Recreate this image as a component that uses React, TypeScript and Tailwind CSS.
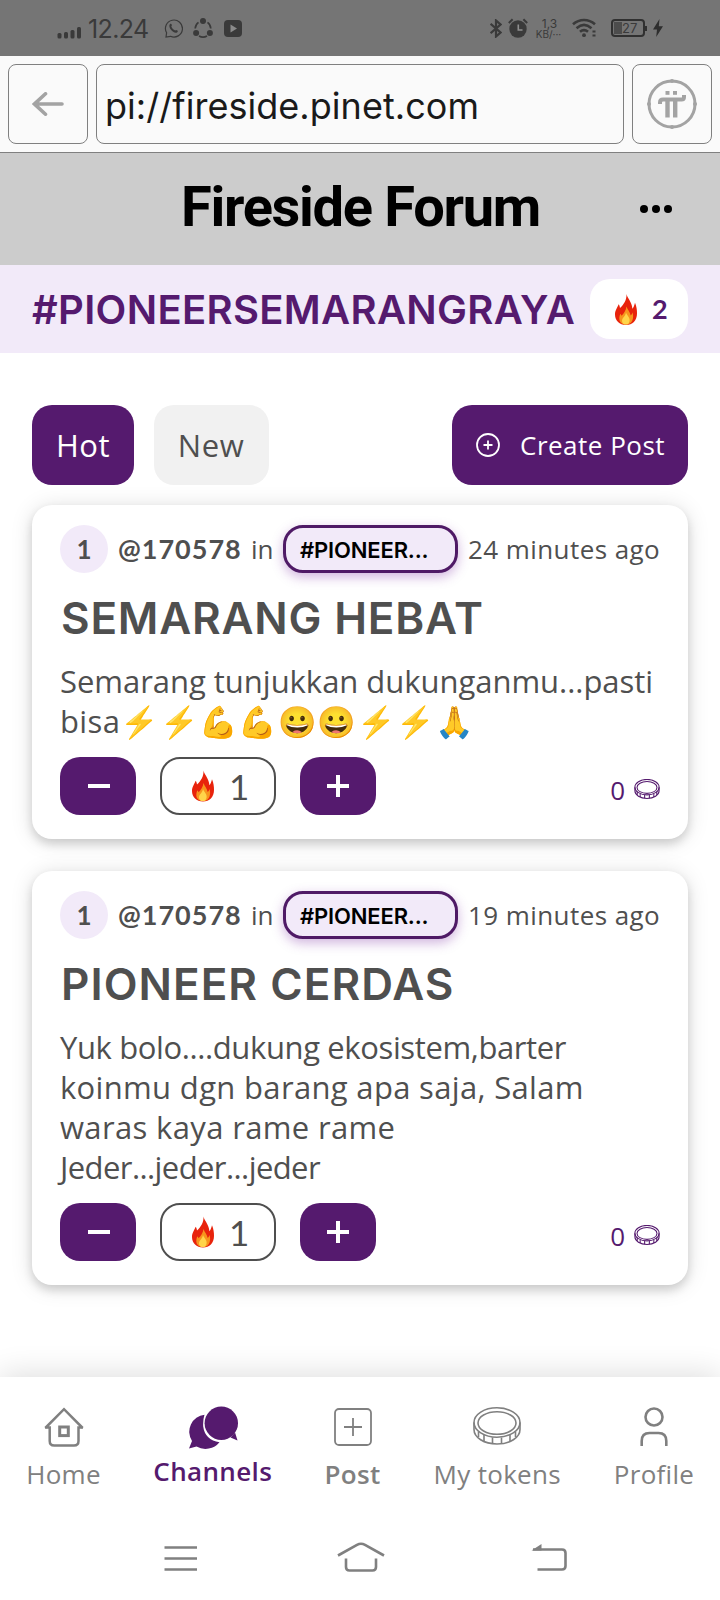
import React from 'react'
import clsx from 'clsx'

type BodyLine = { text: string; className: string }

type Post = {
  id: number
  level: number
  user: string
  channel: string
  time: string
  title: string
  titleClass: string
  body: BodyLine[]
  votes: number
  coins: number
}

const posts: Post[] = [
  {
    id: 1,
    level: 1,
    user: '@170578',
    channel: '#PIONEER...',
    time: '24 minutes ago',
    title: 'SEMARANG HEBAT',
    titleClass: 'tracking-[0.8px]',
    body: [
      { text: 'Semarang tunjukkan dukunganmu...pasti', className: 'tracking-[-0.03px]' },
      { text: 'bisa⚡⚡💪💪😀😀⚡⚡🙏', className: 'tracking-[0.38px]' },
    ],
    votes: 1,
    coins: 0,
  },
  {
    id: 2,
    level: 1,
    user: '@170578',
    channel: '#PIONEER...',
    time: '19 minutes ago',
    title: 'PIONEER CERDAS',
    titleClass: 'tracking-[1.05px]',
    body: [
      { text: 'Yuk bolo....dukung ekosistem,barter', className: 'tracking-[-0.38px]' },
      { text: 'koinmu dgn barang apa saja, Salam', className: 'tracking-[0.33px]' },
      { text: 'waras kaya rame rame', className: 'tracking-[0.35px]' },
      { text: 'Jeder...jeder...jeder', className: 'tracking-[-0.58px]' },
    ],
    votes: 1,
    coins: 0,
  },
]

const FireIcon = ({ className }: { className?: string }) => (
  <svg viewBox="0 0 22 31" className={className} fill="none">
    <path
      d="M11.500 0C12.300 3.800 15.600 6.600 16.800 11.500C17.300 13.200 17.300 14.200 17.300 14.800C18.600 13.600 19.400 11.200 20 8.800C21.600 12.500 22 16 22 19.500C22 26.500 17.500 31 11 31C4.500 31 0 26.500 0 20.500C0 16 2.600 13.500 3.600 10.200C4.500 11.300 4.800 12.600 5 14C8.800 10.500 11.800 6 11.500 0Z"
      fill="#e8230c"
    />
    <path
      d="M11.500 12.500C12.500 16 15 17.500 15.700 21.500C16.800 20.600 17.300 19.400 17.500 18.200C18.900 22.500 18.400 30.600 11 30.600C4 30.600 3.200 24.500 5.400 19.800C6 20.400 6.200 21 6.500 21.800C8.800 19.500 11 16.500 11.500 12.500Z"
      fill="#f7941d"
    />
    <path
      d="M11 18.500C12.200 21.800 15.300 23.500 14.600 27C14 30 12.500 30.600 11 30.600C9 30.600 6.900 29.500 7 26.700C7.100 24 10.500 22 11 18.500Z"
      fill="#ffd54a"
    />
  </svg>
)

const CoinIcon = ({ className, strokeWidth }: { className?: string; strokeWidth: number }) => (
  <svg viewBox="0 0 48 38" className={className} fill="none" stroke="currentColor" strokeWidth={strokeWidth}>
    <ellipse cx="24" cy="15.500" rx="23" ry="14.700" />
    <ellipse cx="24" cy="16" rx="19" ry="11.300" />
    <path d="M1 15.500V22.500C1 30.500 11 37 24 37S47 30.500 47 22.500V15.500" />
    <path d="M5.500 24.500V30M11 28V34M19.500 30.500V36.700M28.500 30.500V36.700M37 28V34M42.500 24.500V30" />
  </svg>
)

const StatusBar = () => (
  <div className="flex h-14 items-center bg-[#757575] pl-[57px] text-[#3a3a3a]">
    <svg viewBox="0 0 24 12" className="mt-[9px] h-3 w-6" fill="currentColor">
      <rect x="0.500" y="6" width="4" height="5.500" rx="1.500" />
      <rect x="7" y="5" width="4" height="6.500" rx="1.500" />
      <rect x="13.500" y="3" width="4" height="8.500" rx="1.500" />
      <rect x="20" y="0" width="4" height="11.500" rx="1.500" />
    </svg>
    <span className="mt-[2px] ml-[7px] w-[62px] text-[25px] leading-[38px] tracking-[-0.6px] whitespace-nowrap font-['Inter',sans-serif]">
      12.24
    </span>
    <svg viewBox="0 0 19 19" className="ml-[14px] size-[19px]" fill="none" stroke="currentColor">
      <path d="M2 18L2.600 13.800A8.500 8.500 0 1 1 6.500 17.300Z" strokeWidth="1.200" />
      <path
        d="M5.800 5.200C6.500 4.400 7.300 4.600 7.700 5.600C8.100 6.700 7.700 6.900 7.300 7.500C8 9.300 9.500 10.800 11.200 11.500C12 10.700 12.300 10.700 13.400 11.500C14.200 12.100 13.800 13 13 13.500C9.500 15 3.700 8.500 5.800 5.200Z"
        fill="currentColor"
        stroke="none"
      />
    </svg>
    <svg viewBox="0 0 20 20" className="ml-[10px] size-5" fill="none" stroke="currentColor" strokeWidth="1.600">
      <path d="M2.200 10.500A8 8 0 0 1 5.500 4.300M14.500 4.300A8 8 0 0 1 17.800 10.500M14 18A8 8 0 0 1 6 18" />
      <g fill="currentColor" stroke="none">
        <circle cx="10" cy="3" r="3" />
        <circle cx="3.100" cy="15" r="3" />
        <circle cx="16.900" cy="15" r="3" />
      </g>
    </svg>
    <svg viewBox="0 0 18 17" className="ml-[11px] h-[17px] w-[18px]">
      <rect width="18" height="17" rx="4" fill="currentColor" />
      <path d="M6.500 4.500V12.500L13 8.500Z" fill="#8a8a8a" />
    </svg>
    <svg viewBox="0 0 12 19" className="ml-[248px] h-[19px] w-3" fill="none" stroke="currentColor" strokeWidth="2.200">
      <path d="M0.600 4.800L10.500 13.500L6 17.500V1.500L10.500 5.500L0.600 14.200" />
    </svg>
    <svg viewBox="0 0 20 20" className="ml-[6px] size-5" fill="none">
      <circle cx="10" cy="11" r="8.700" fill="currentColor" />
      <path d="M0.800 5L4.600 1.200M19.200 5L15.400 1.200" stroke="currentColor" strokeWidth="2" />
      <path d="M10.300 6.500V12H14.500" stroke="#8f8f8f" strokeWidth="1.600" />
    </svg>
    <div className="ml-[6px] flex w-[29px] flex-col items-center font-['Inter',sans-serif] whitespace-nowrap">
      <span className="pl-[2px] text-[12px] leading-[11px]">1,3</span>
      <span className="text-[10px] leading-[10px]">KB/···</span>
    </div>
    <svg viewBox="0 0 25 20" className="ml-[9px] h-5 w-[25px]" fill="none" stroke="currentColor" strokeWidth="2.600">
      <path d="M1 6.300C7.500 0.600 16.500 0.600 23 6.300" />
      <path d="M4.500 10.200C9.200 6.100 14.800 6.100 19.500 10.200" />
      <path d="M8 13.800C10.500 11.700 13.500 11.700 16 13.800" />
      <circle cx="12" cy="17.200" r="1.900" fill="currentColor" stroke="none" />
      <path d="M20.500 13.500H23.500M20.500 17.500H23.500" strokeWidth="2.200" />
    </svg>
    <div className="ml-[14px] flex h-[18px] w-[34px] items-center rounded-[4px] border-2 border-[#303030] p-[1px]">
      <div className="h-3 w-[8px] bg-[#4c4c4c]" />
      <span className="text-[13px] leading-3 font-['Inter',sans-serif]">27</span>
    </div>
    <div className="h-[5px] w-[2px] bg-[#303030]" />
    <svg viewBox="0 0 10 18" className="ml-[6px] h-[18px] w-[10px]" fill="#2e2e2e">
      <path d="M6.500 0L0 10.500H4L3.200 18L10 7.300H5.800Z" />
    </svg>
  </div>
)

const BrowserBar = () => (
  <div className="flex h-[97px] gap-2 border-b border-[#808080] bg-[#fafafa] p-2">
    <button className="flex h-20 w-20 shrink-0 items-center justify-center rounded-[8px] border border-[#808080]">
      <svg viewBox="0 0 32 24" className="h-6 w-8" fill="none" stroke="#a3a3a3" strokeWidth="3.600" strokeLinecap="round">
        <path d="M2.500 12H30M13.500 1.800L2.500 12L13.500 22.200" />
      </svg>
    </button>
    <div className="flex h-20 flex-1 items-center rounded-[8px] border border-[#808080] pl-2 font-['Inter',sans-serif] text-[36px] leading-[48px] text-[#1a1a1a]">
      <span className="pt-[3px] tracking-[0.04px]">pi://fireside.pinet.com</span>
    </div>
    <button className="flex h-20 w-20 shrink-0 items-center justify-center rounded-[8px] border border-[#808080]">
      <svg viewBox="0 0 50 50" className="size-[50px]" fill="none" stroke="#a3a3a3">
        <circle cx="25" cy="25" r="23" strokeWidth="3" />
        <g fill="#a3a3a3" stroke="none">
          <circle cx="25" cy="2" r="2" />
          <circle cx="25" cy="48" r="2" />
          <circle cx="2" cy="25" r="2" />
          <circle cx="48" cy="25" r="2" />
          <rect x="18.500" y="12" width="4" height="3.800" />
          <rect x="26" y="12" width="4" height="3.800" />
        </g>
        <path d="M13 25V23.500Q13 20.500 16 20.500H34.500Q37 20.500 37 18V16" strokeWidth="4" />
        <path d="M20.500 21V38.500M28.200 21V38.500" strokeWidth="4.400" />
      </svg>
    </button>
  </div>
)

const ForumHeader = () => (
  <header className="flex h-28 items-center bg-[#cccccc]">
    <h1 className="-mt-[5px] ml-[181px] w-[362px] font-['Roboto',sans-serif] text-[56px] leading-[64px] font-bold tracking-[-1.3px] whitespace-nowrap text-black">
      Fireside Forum
    </h1>
    <div className="ml-[97px] flex gap-1">
      <i className="size-2 rounded-full bg-black" />
      <i className="size-2 rounded-full bg-black" />
      <i className="size-2 rounded-full bg-black" />
    </div>
  </header>
)

const ChannelBar = () => (
  <div className="flex h-[88px] items-center justify-between bg-[#f2eaf9] px-8">
    <h2 className="pt-[1px] font-['Inter',sans-serif] text-[40px] leading-[48px] font-semibold tracking-[0.33px] whitespace-nowrap text-[#551a6e]">
      #PIONEERSEMARANGRAYA
    </h2>
    <div className="flex h-[60px] w-[98px] shrink-0 items-center rounded-[20px] bg-white pl-[25px]">
      <FireIcon className="h-[31px] w-[22px]" />
      <span className="ml-[15px] font-['Lato',sans-serif] text-[27px] leading-8 font-bold text-[#551a6e]">2</span>
    </div>
  </div>
)

const PostCard = ({ post }: { post: Post }) => (
  <article className="rounded-[20px] bg-white px-7 pt-5 pb-6 text-[#4f4f4f] shadow-[0_5px_10px_rgba(0,0,0,0.14),0_2px_22px_rgba(0,0,0,0.13)]">
    <div className="flex h-12 items-center text-[26px] leading-8 whitespace-nowrap">
      <span className="flex size-12 shrink-0 items-center justify-center rounded-full bg-[#f2eaf9] font-['Lato',sans-serif] font-bold">
        {post.level}
      </span>
      <span className="ml-[10px] w-[133px] shrink-0 font-['Lato',sans-serif] text-[27px] font-bold tracking-[1px]">
        {post.user}
      </span>
      <span className="w-[32px] shrink-0">in</span>
      <span className="h-12 w-[175px] shrink-0 rounded-[20px] border-[3px] border-[#4f1a66] bg-[#f2eaf9] pl-[14px] font-['Inter',sans-serif] text-[22px] leading-[44px] font-semibold tracking-[-0.15px] text-black shadow-[0_4px_12px_rgba(120,40,160,0.35)]">
        {post.channel}
      </span>
      <span className="ml-[10px] tracking-[0.42px]">{post.time}</span>
    </div>
    <h3
      className={clsx(
        "mt-[16px] pl-[1px] font-['Inter',sans-serif] text-[44px] leading-[58px] font-semibold whitespace-nowrap",
        post.titleClass,
      )}
    >
      {post.title}
    </h3>
    <p className="mt-[14px] text-[31px] leading-10 whitespace-nowrap">
      {post.body.map((line) => (
        <span key={line.text} className={clsx('block h-10', line.className)}>
          {line.text}
        </span>
      ))}
    </p>
    <div className="mt-4 flex h-[58px] items-center">
      <button className="flex h-[58px] w-[76px] items-center justify-center rounded-[20px] bg-[#551a6e]">
        <i className="ml-[2px] h-1 w-[22px] bg-white" />
      </button>
      <div className="ml-6 flex h-[58px] w-[116px] items-center rounded-[20px] border-2 border-[#4f4f4f] pl-[30px]">
        <FireIcon className="h-8 w-[22px]" />
        <span className="ml-[15px] font-['Lato',sans-serif] text-[35px] leading-10">{post.votes}</span>
      </div>
      <button className="ml-6 flex h-[58px] w-[76px] items-center justify-center rounded-[20px] bg-[#551a6e]">
        <svg viewBox="0 0 22 22" className="size-[22px]" stroke="#fff" strokeWidth="4">
          <path d="M0 11H22M11 0V22" />
        </svg>
      </button>
      <div className="ml-auto flex items-center gap-[9px] pt-[7px] text-[#551a6e]">
        <span className="text-[26px] leading-8">{post.coins}</span>
        <CoinIcon className="mb-[1px] h-5 w-[26px]" strokeWidth={2} />
      </div>
    </div>
  </article>
)

const BottomNav = () => (
  <nav className="flex h-[138px] justify-between bg-white px-[26px] pt-[29px] text-[26px] leading-8 whitespace-nowrap text-[#808080] shadow-[0_-2px_30px_rgba(0,0,0,0.14)]">
    <div className="flex w-[75px] flex-col items-center">
      <svg viewBox="0 0 40 40" className="mt-[1px] size-10" fill="none" stroke="currentColor" strokeWidth="2.500">
        <path d="M1.300 21L20 2.200L38.700 21M1 20.500H5.700V34Q5.700 38.500 10.200 38.500H30Q34.500 38.500 34.500 34V20.500H39" />
        <rect x="15.700" y="20" width="8.600" height="8.600" strokeWidth="3" />
      </svg>
      <span className="mt-[11px] tracking-[0.3px]">Home</span>
    </div>
    <div className="flex w-[118px] flex-col items-center font-bold text-[#551a6e]">
      <svg viewBox="0 0 50 43" className="h-[43px] w-[50px]" fill="currentColor">
        <path d="M16.500 8.800A17 17 0 0 0 4 35L1 42.500L8.500 40.500A18 18 0 0 0 31.500 36.200Q17 34 15.200 20.500Q14.800 14 16.500 8.800Z" />
        <circle cx="33.300" cy="17.200" r="16.700" />
        <path d="M42.500 31.500L49.500 34.500L47 26.500Z" />
      </svg>
      <span className="mt-[6px] font-semibold tracking-[0.35px]">Channels</span>
    </div>
    <div className="flex w-14 flex-col items-center">
      <svg viewBox="0 0 38 38" className="mt-[2px] size-[38px]" fill="none" stroke="currentColor" strokeWidth="1.800">
        <rect x="1" y="1" width="36" height="36" rx="4" />
        <path d="M10 19H28M19 10V28" />
      </svg>
      <span className="mt-3 font-semibold tracking-[0.3px]">Post</span>
    </div>
    <div className="flex w-32 flex-col items-center">
      <CoinIcon className="mt-[1px] h-[38px] w-12" strokeWidth={1.6} />
      <span className="mt-[13px] tracking-[0.3px]">My tokens</span>
    </div>
    <div className="flex w-20 flex-col items-center">
      <svg viewBox="0 0 28 39" className="mt-[1px] h-[39px] w-7" fill="none" stroke="currentColor" strokeWidth="2.600">
        <circle cx="14" cy="10" r="8.500" />
        <path d="M1.700 39V34Q1.700 26 9.500 26H18.500Q26.300 26 26.300 34V39" />
      </svg>
      <span className="mt-3 tracking-[0.3px]">Profile</span>
    </div>
  </nav>
)

const SystemNav = () => (
  <div className="flex h-[85px] bg-white pt-[26px] pl-[164px] text-[#808080]">
    <svg viewBox="0 0 34 30" className="h-[30px] w-[34px]" stroke="currentColor" strokeWidth="2.600">
      <path d="M0.500 6.500H33M0.500 17.500H33M0.500 28.500H33" />
    </svg>
    <svg viewBox="0 0 48 32" className="ml-[139px] h-8 w-12" fill="none" stroke="currentColor" strokeWidth="2.600">
      <path d="M1 14.500L20 3.800Q24 1.600 28 3.800L47 14.500" />
      <path d="M9 17.500V26Q9 29.500 12.500 29.500H35.500Q39 29.500 39 26V17.500" />
    </svg>
    <svg viewBox="0 0 36 32" className="ml-[146px] h-8 w-9" fill="none" stroke="currentColor" strokeWidth="2.600">
      <path d="M2 8.500H31Q34.500 8.500 34.500 12V25Q34.500 28.500 31 28.500H6.500" />
      <path d="M0.500 9.500L10.500 3V9.500Z" fill="currentColor" stroke="none" />
    </svg>
  </div>
)

const App = () => {
  return (
    <div className="flex h-[1600px] w-[720px] flex-col overflow-hidden bg-white font-['Open_Sans',sans-serif]">
      <StatusBar />
      <BrowserBar />
      <ForumHeader />
      <ChannelBar />
      <main className="flex-1 px-8 pt-[52px]">
        <div className="flex h-20 text-[31px] leading-10">
          <button className="h-20 w-[102px] rounded-[20px] bg-[#551a6e] font-medium tracking-[0.5px] text-white">
            Hot
          </button>
          <button className="ml-5 h-20 w-[115px] rounded-[20px] bg-[#f1f1f1] pr-[1px] font-medium tracking-[0.6px] text-[#4f4f4f]">
            New
          </button>
          <button className="ml-auto flex h-20 w-[236px] items-center rounded-[20px] bg-[#551a6e] pl-6 text-[26px] text-white">
            <svg viewBox="0 0 24 24" className="size-6" fill="none" stroke="currentColor" strokeWidth="1.800">
              <circle cx="12" cy="12" r="11" />
              <path d="M7.500 12H16.500M12 7.500V16.500" />
            </svg>
            <span className="ml-5 tracking-[0.5px]">Create Post</span>
          </button>
        </div>
        <div className="mt-5 flex flex-col gap-8">
          {posts.map((post) => (
            <PostCard key={post.id} post={post} />
          ))}
        </div>
      </main>
      <BottomNav />
      <SystemNav />
    </div>
  )
}

export default App
